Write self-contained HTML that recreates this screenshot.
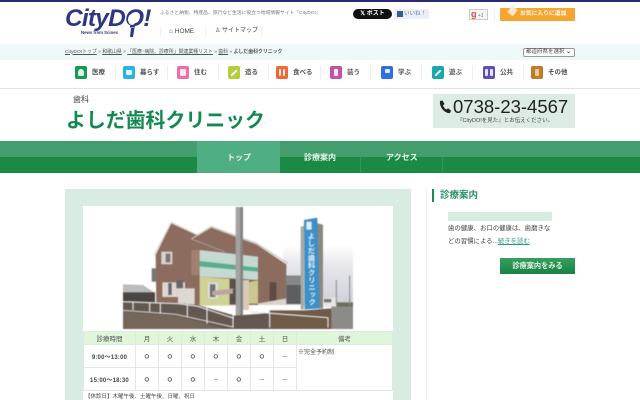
<!DOCTYPE html>
<html lang="ja"><head><meta charset="utf-8"><title>よしだ歯科クリニック</title>
<style>
*{box-sizing:border-box}
html,body{margin:0;padding:0;width:640px;height:400px;overflow:hidden;background:#fff}
body{position:relative;font-family:"Liberation Sans","Noto Sans CJK JP",sans-serif;color:#333}
.a{position:absolute;white-space:nowrap}
.ic{position:absolute;top:66px;width:12px;height:13px;border-radius:2px}
.ic i{position:absolute;left:3px;top:3px;width:6px;height:7px;background:#fff;opacity:.85;border-radius:1px}
.nl{position:absolute;top:67px;font-size:6.500px;line-height:11px;font-weight:bold;color:#555;white-space:nowrap}
.sp{position:absolute;top:66px;width:1px;height:14px;background:#eee}
.ns{position:absolute;top:141px;width:1px;height:32px;background:#3aa268;opacity:.6}
td,th{border:1px solid #dfe8e2;padding:0;text-align:center;font-weight:normal}
table{position:absolute;left:83px;top:331px;width:310px;height:60px;border-collapse:collapse;table-layout:fixed;font-size:6.500px;background:#fff;color:#555}
th{background:#dff6d9;height:13px}
td{font-size:9px;color:#444;-webkit-text-stroke:.3px #444}
td.d{font-size:6px;-webkit-text-stroke:0}
td.t{font-size:6px;font-weight:bold;letter-spacing:.2px;-webkit-text-stroke:0}
</style></head><body>
<div class="a" style="left:0;top:0;width:640px;height:2px;background:#2a2a72"></div>

<div class="a" style="left:65px;top:2.500px;font-size:24.500px;line-height:32px;font-weight:bold;font-style:italic;color:#2f3682;letter-spacing:-.8px">CityDO!</div>
<svg class="a" style="left:122px;top:10px" width="24" height="28" viewBox="0 0 24 28"><ellipse cx="10" cy="9.500" rx="4" ry="5.500" fill="#fff"/><path d="M9 18h3.500l-1.500 9H8z" fill="#2f3682"/><rect x="8" y="15.500" width="5" height="2" fill="#2f3682"/></svg>
<div class="a" style="left:81px;top:30px;font-size:4.300px;line-height:6px;font-weight:bold;color:#2f3682">News from Scinex</div>
<div class="a" style="left:160px;top:9px;font-size:4.800px;line-height:9px;color:#777">ふるさと納税、特産品、旅行など生活に役立つ地域情報サイト『CityDO!』</div>
<div class="sp" style="left:160px;top:27px;height:9px"></div>
<div class="a" style="left:169px;top:27px;font-size:6.500px;line-height:9px;color:#444"><b style="color:#2f3682">⌂</b> HOME</div>
<div class="sp" style="left:205px;top:27px;height:9px"></div>
<div class="a" style="left:215px;top:27px;font-size:6px;line-height:9px;color:#444">♙ サイトマップ</div>
<div class="sp" style="left:261px;top:27px;height:9px"></div>

<div class="a" style="left:353px;top:9px;width:39px;height:10px;background:#111;border-radius:5px;color:#fff;font-size:6px;line-height:10px;font-weight:bold;text-align:center">𝕏 ポスト</div>
<div class="a" style="left:394px;top:9px;width:35px;height:10px;background:#e9eef7;border-radius:2px;color:#6b7fa8;font-size:5.500px;line-height:10px;padding-left:10px">いいね！</div>
<div class="a" style="left:397px;top:11px;width:6px;height:6px;background:#3b5998"></div>
<div class="a" style="left:469px;top:9px;width:19px;height:11px;background:#f5f5f5;border:1px solid #ccc;color:#c9523f;font-size:9px;line-height:8px;font-weight:bold;padding-left:1px">g<span style="font-size:5px;color:#777;font-weight:normal"> +1</span></div>
<div class="sp" style="left:494px;top:8px;height:13px"></div>
<div class="a" style="left:500px;top:8px;width:75px;height:13px;background:#f6a52e;border-radius:1px;color:#fff;font-size:5.800px;line-height:13px;font-weight:bold;padding-left:20px">お気に入りに追加</div>
<div class="a" style="left:509px;top:7px;width:7px;height:8px;background:#fde9c9;transform:rotate(40deg);border-radius:1px"></div>

<div class="a" style="left:0;top:44px;width:640px;height:16px;background:#eef8f9"></div>
<div class="a" style="left:65px;top:48.500px;font-size:4.900px;line-height:8px;color:#555"><u>CityDO!トップ</u> » <u>和歌山県</u> » <u>「医療･病院、診療所」関連業種リスト</u> » <u>歯科</u> » <b>よしだ歯科クリニック</b></div>
<div class="a" style="left:523px;top:48px;width:52px;height:9px;background:#fff;border:1px solid #999;border-radius:2px;font-size:5.500px;line-height:7px;padding-left:2px;color:#444">都道府県を選択 <b style="font-size:6px">⌄</b></div>

<div class="ic" style="left:75px;background:#149a52"><i style="border-radius:3px 3px 1px 1px"></i></div><div class="nl" style="left:92px">医療</div><div class="sp" style="left:115px"></div>
<div class="ic" style="left:123px;background:#29b4e4"><i style="height:5px;top:4px"></i></div><div class="nl" style="left:140px">暮らす</div><div class="sp" style="left:167px"></div>
<div class="ic" style="left:177px;background:#ec6fa5"><i></i></div><div class="nl" style="left:194px">住む</div><div class="sp" style="left:218px"></div>
<div class="ic" style="left:228px;background:#b5ce3e"><i style="height:2px;top:6px;transform:rotate(-45deg);left:2px;width:8px"></i></div><div class="nl" style="left:245px">造る</div><div class="sp" style="left:268px"></div>
<div class="ic" style="left:276px;background:#ee6a35"><i style="width:2px;left:3px"></i><i style="width:2px;left:7px"></i></div><div class="nl" style="left:293px">食べる</div><div class="sp" style="left:320px"></div>
<div class="ic" style="left:330px;background:#bf55ab"><i style="width:4px;left:4px"></i></div><div class="nl" style="left:347px">装う</div><div class="sp" style="left:370px"></div>
<div class="ic" style="left:381px;background:#2f6fe0"><i style="width:5px;height:4px;left:3.500px;top:3px"></i></div><div class="nl" style="left:398px">学ぶ</div><div class="sp" style="left:421px"></div>
<div class="ic" style="left:432px;background:#1ca9a7"><i style="height:2px;top:6px;transform:rotate(-45deg);left:2px;width:8px"></i></div><div class="nl" style="left:449px">遊ぶ</div><div class="sp" style="left:472px"></div>
<div class="ic" style="left:483px;background:#5d4fb8"><i style="width:3px;left:2px"></i><i style="width:3px;left:7px"></i></div><div class="nl" style="left:500px">公共</div><div class="sp" style="left:523px"></div>
<div class="ic" style="left:531px;background:#c07b26"><i style="width:4px;left:4px;opacity:.6"></i></div><div class="nl" style="left:548px">その他</div>
<div class="a" style="left:0;top:88px;width:640px;height:1px;background:#e4e4e4"></div>

<div class="a" style="left:73px;top:95px;font-size:8px;line-height:10px;color:#444">歯科</div>
<div class="a" style="left:66px;top:108.500px;font-size:19.900px;line-height:24px;font-weight:bold;color:#12894f">よしだ歯科クリニック</div>
<div class="a" style="left:433px;top:94px;width:142px;height:34px;background:#dcece4"></div>
<svg class="a" style="left:438px;top:100px" width="13" height="14" viewBox="0 0 13 14"><path d="M2 1l2.500-.5 2 3.500-1.500 1.500c.5 1.500 2 3.500 3.500 4l1.500-1.300 3 2.300-1 2.500C8 14 1 8 2 1z" fill="#222"/></svg>
<div class="a" style="left:453px;top:96px;font-size:18.500px;line-height:22px;color:#222">0738-23-4567</div>
<div class="a" style="left:457px;top:117px;font-size:5.500px;line-height:8px;color:#444">『CityDO!を見た』とお伝えください。</div>

<div class="a" style="left:0;top:141px;width:640px;height:16px;background:#439d6c"></div>
<div class="a" style="left:0;top:157px;width:640px;height:16px;background:#1b8a45"></div>
<div class="a" style="left:197px;top:141px;width:83px;height:32px;background:#4faf82"></div>
<div class="ns" style="left:360px"></div><div class="ns" style="left:442px"></div>
<div class="a" style="left:227px;top:152px;font-size:8px;line-height:11px;font-weight:bold;color:#e8f5ee">トップ</div>
<div class="a" style="left:304px;top:152px;font-size:8px;line-height:11px;font-weight:bold;color:#e8f5ee">診療案内</div>
<div class="a" style="left:386px;top:152px;font-size:8px;line-height:11px;font-weight:bold;color:#e8f5ee">アクセス</div>

<div class="a" style="left:65px;top:189px;width:346px;height:211px;background:#d8ece2"></div>
<div class="a" style="left:83px;top:206px;width:310px;height:194px;background:#fff"></div>
<svg class="a" style="left:123px;top:207px;filter:blur(.4px)" width="230" height="122" viewBox="0 6 690 366">
<defs><linearGradient id="sky" x1="0" y1="0" x2="0" y2="1"><stop offset="0" stop-color="#fff"/><stop offset=".35" stop-color="#e6e6ec"/><stop offset="1" stop-color="#cfcfd8"/></linearGradient></defs>
<rect x="0" y="6" width="690" height="366" fill="#fff"/>
<path d="M480 120H690V300H480z" fill="url(#sky)"/>
<path d="M0 238l60 2 36 24v30H0z" fill="#bcbcbc"/>
<path d="M0 262h96v30H0z" fill="#4a4644"/>
<path d="M86 190h14v40H86z" fill="#777"/>
<path d="M98 150L145 55 225 92 265 68 400 118 490 178V285L405 300H100z" fill="#8c6c5f"/>
<path d="M93 152L145 52l78 38" fill="none" stroke="#d9d5cf" stroke-width="3.500"/>
<path d="M205 102l60-37 135 50 95 60" fill="none" stroke="#c9c2b8" stroke-width="3.500"/>
<path d="M205 102l100 38" stroke="#a99f94" stroke-width="3" fill="none"/>
<rect x="115" y="140" width="33" height="38" fill="#d8d4cc"/><rect x="128" y="146" width="14" height="26" fill="#777"/>
<rect x="118" y="232" width="68" height="44" fill="#dcd8d0"/><rect x="136" y="234" width="10" height="36" fill="#666"/><rect x="160" y="226" width="20" height="24" fill="#666"/>
<path d="M205 135h25v75h-25z" fill="#a27f70"/>
<path d="M230 215l90 7v80h-90z" fill="#cfd295"/>
<rect x="255" y="233" width="30" height="48" fill="#dedede"/><rect x="261" y="238" width="16" height="38" fill="#707070"/>
<path d="M320 222h55v75h-55z" fill="#5a5148"/>
<path d="M375 232l30-6v70h-30z" fill="#c9c88e"/>
<path d="M230 135l175 20v70l-175-10z" fill="#c6d9d0"/>
<path d="M230 168l175 20v12l-175-16z" fill="#57ad90"/>
<path d="M268 258l62-8v16l-62 6z" fill="#b9a6a4"/>
<path d="M358 225h20v90h-20z" fill="#d9c9b7"/>
<rect x="165" y="250" width="50" height="70" fill="#ddd8d2"/>
<path d="M440 232h20v62h-20z" fill="#5f4b43"/>
<path d="M405 295l85-15v20h-85z" fill="#d8d2c8"/>
<path d="M490 212h45v85h-45z" fill="#5c5f62"/><path d="M490 212h45v28h-45z" fill="#85878a"/>
<path d="M338 5h22v335h-22z" fill="#a3a3a1"/><path d="M352 5h8v335h-8z" fill="#838381"/>
<path d="M533 65l10-2v250h-10z" fill="#a9a9a4"/>
<path d="M583 55l17 4v252h-14z" fill="#8b8880"/>
<path d="M543 45l40-7 7 272-45 3z" fill="#3d8fc6"/>
<text x="566" y="82" font-size="22" font-weight="bold" fill="#e8f4fb" style="writing-mode:vertical-rl" transform="rotate(-1 566 180)">よしだ歯科クリニック</text>
<rect x="550" y="50" width="16" height="24" fill="#dfeef6"/>
<path d="M600 278h40v28h-40z" fill="#e6e6e6"/><path d="M603 282h22v10h-22z" fill="#777"/>
<path d="M640 292h50v20h-50z" fill="#6b7058"/>
<path d="M640 225v70M680 212v90" stroke="#888" stroke-width="3"/>
<path d="M0 288l165 6 60 6 110 32 290-22v62H0z" fill="#635850"/>
<path d="M440 316h200v56H440z" fill="#705a48"/>
<path d="M0 320l170 14 140 38H0z" fill="#75665a"/>
<path d="M625 305h65v67h-65z" fill="#8b8c88"/>
<path d="M0 290l165 6 60 8 108 36" fill="none" stroke="#e8e8e8" stroke-width="3.500"/>
<path d="M0 316l160 12 170 38" fill="none" stroke="#d9d9d6" stroke-width="3"/>
<path d="M380 320l235 18" fill="none" stroke="#e8e8e8" stroke-width="3.500"/>
<path d="M30 290v25M80 292v28M112 294v32M193 296v42M252 304v52M330 330v38M440 322v46M615 338v30" stroke="#e8e8e8" stroke-width="3.500"/>
</svg>

<table><colgroup><col style="width:52px"><col style="width:23px"><col style="width:23px"><col style="width:23px"><col style="width:23px"><col style="width:23px"><col style="width:23px"><col style="width:23px"><col></colgroup>
<tr><th>診療時間</th><th>月</th><th>火</th><th>水</th><th>木</th><th>金</th><th>土</th><th>日</th><th>備考</th></tr>
<tr><td class="t">9:00～13:00</td><td>○</td><td>○</td><td>○</td><td>○</td><td>○</td><td>○</td><td class="d">－</td><td rowspan="2" style="font-size:6px;-webkit-text-stroke:0;text-align:left;vertical-align:top;padding:2px 1px">※完全予約制</td></tr>
<tr><td class="t">15:00～18:30</td><td>○</td><td>○</td><td>○</td><td class="d">－</td><td>○</td><td class="d">－</td><td class="d">－</td></tr>
</table>
<div class="a" style="left:85px;top:393px;font-size:5.500px;line-height:9px;color:#444">【休診日】木曜午後、土曜午後、日曜、祝日</div>

<div class="a" style="left:426px;top:188px;width:1px;height:212px;background:#f1f1f1"></div>
<div class="a" style="left:432px;top:189px;width:2px;height:13px;background:#178a4e"></div>
<div class="a" style="left:440px;top:189.500px;font-size:9.500px;line-height:11px;font-weight:bold;color:#2a9366">診療案内</div>
<div class="a" style="left:448px;top:212px;width:104px;height:9px;background:#d8ece2"></div>
<div class="a" style="left:448px;top:223px;font-size:6.400px;line-height:12.500px;color:#444">歯の健康、お口の健康は、歯磨きな<br>どの習慣による...<span style="color:#2a9a8a;text-decoration:underline">続きを読む</span></div>
<div class="a" style="left:500px;top:258px;width:75px;height:16px;background:linear-gradient(#38a05e,#178244);color:#e6f3ea;font-size:7.200px;line-height:16px;font-weight:bold;text-align:center">診療案内をみる</div>
</body></html>
